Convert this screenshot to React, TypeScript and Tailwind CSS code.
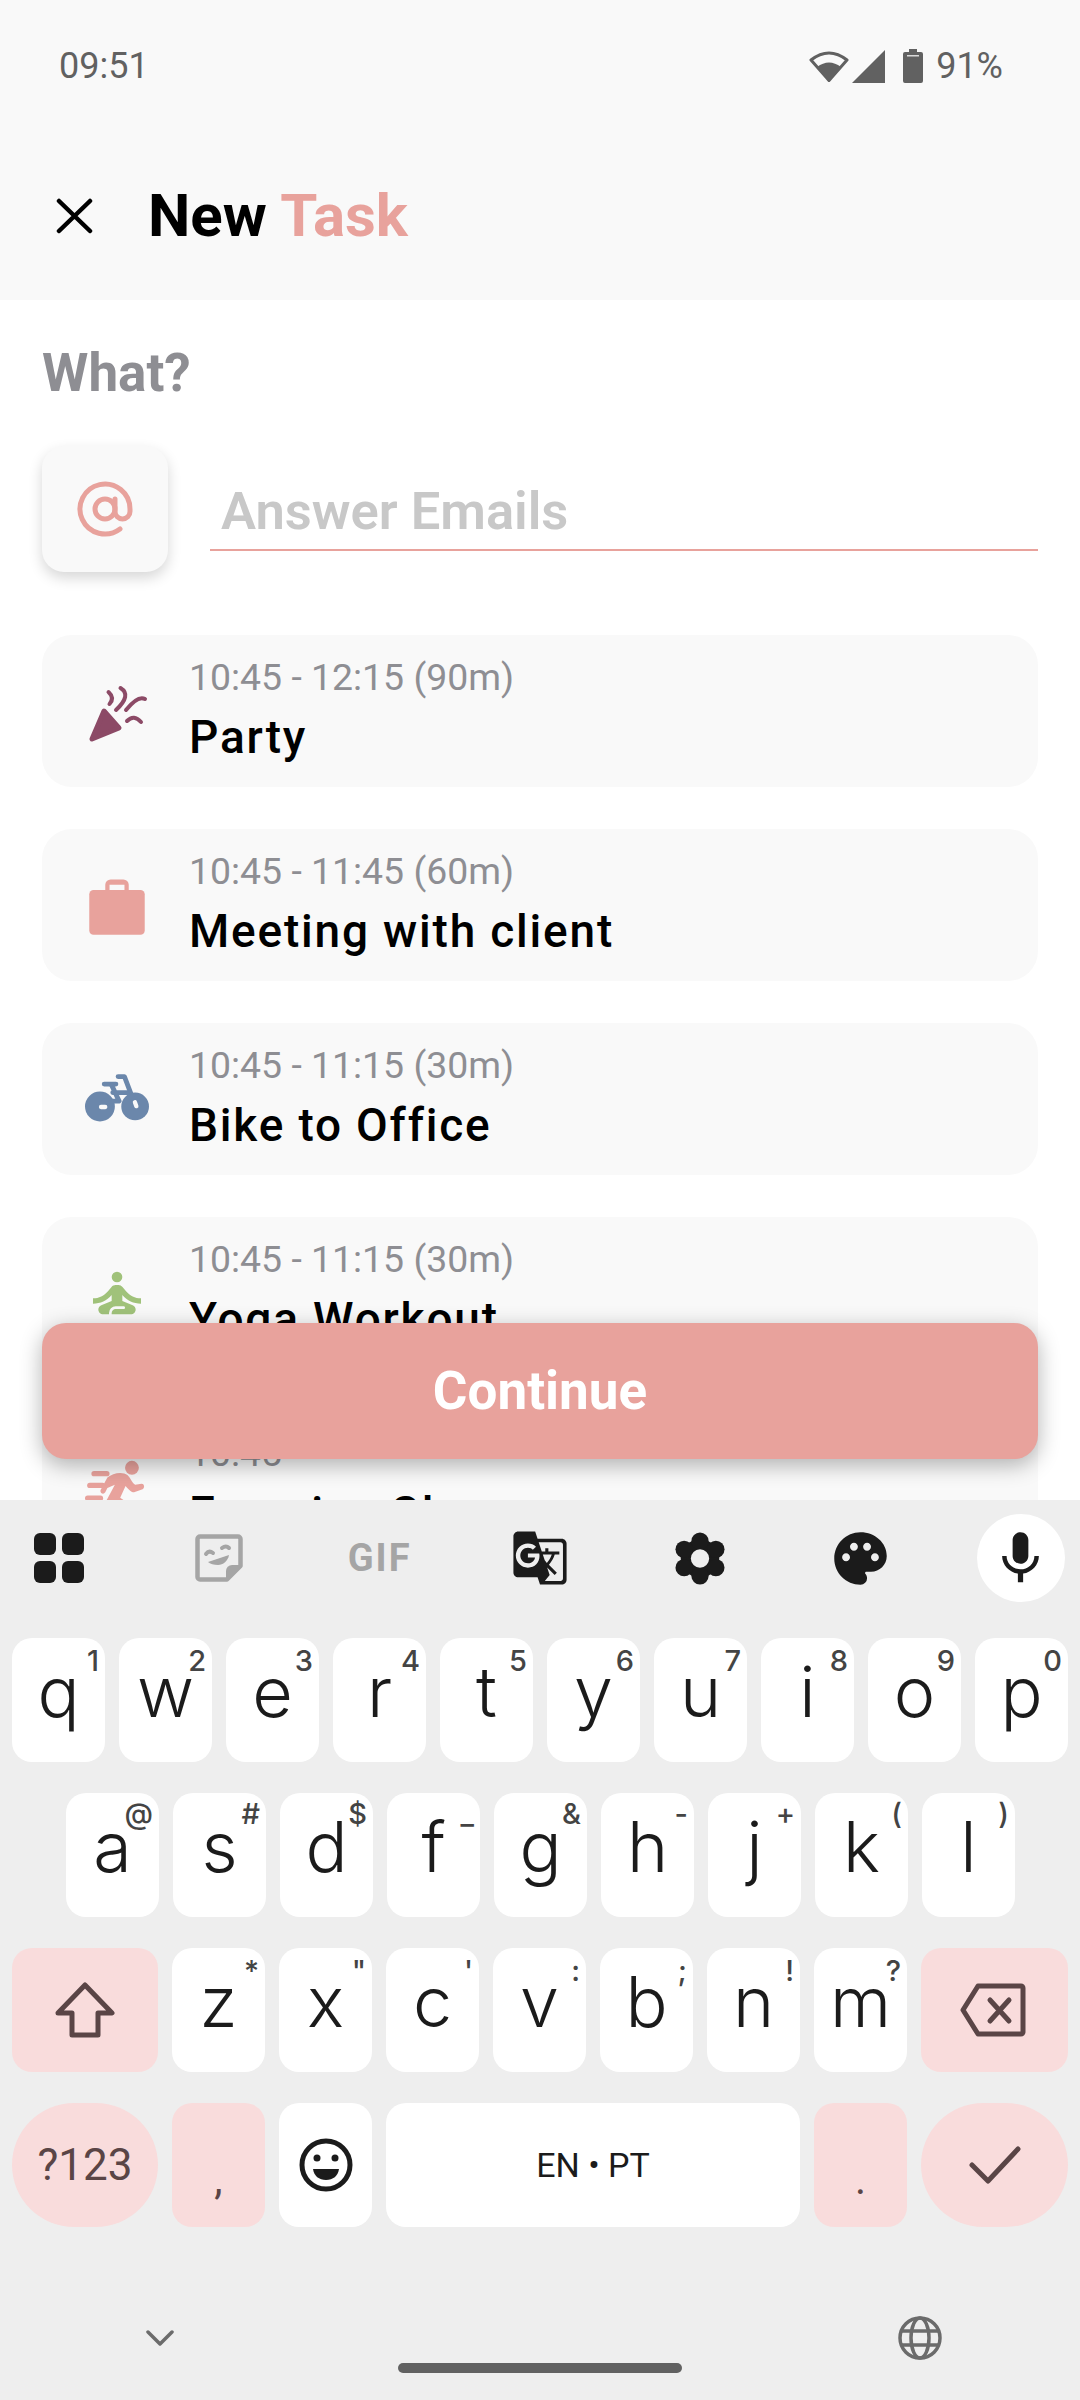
import { AtSign } from "lucide-react";
import { MdGTranslate, MdMic, MdPalette, MdSelfImprovement } from "react-icons/md";

const roboto = "font-['Roboto',sans-serif]";

function WifiIcon() {
  return (
    <svg width="40" height="34" viewBox="0 0 40 34" className="text-[#616161]">
      <path d="M20 31.5 2 11Q20-3 38 11Z" fill="none" stroke="currentColor" strokeWidth="3" strokeLinejoin="round" />
      <path d="M20 33 8 18Q20 9 32 18Z" fill="currentColor" />
    </svg>
  );
}

function SignalIcon() {
  return (
    <svg width="33" height="33" viewBox="0 0 33 33" className="text-[#616161]">
      <path d="M33 0v33H0Z" fill="currentColor" />
    </svg>
  );
}

function BatteryIcon() {
  return (
    <svg width="20" height="34" viewBox="0 0 20 34" className="text-[#616161]">
      <path d="M6 0h8v3h4a2 2 0 0 1 2 2v27a2 2 0 0 1-2 2H2a2 2 0 0 1-2-2V5a2 2 0 0 1 2-2h4Z" fill="currentColor" />
      <rect x="4" y="6" width="12" height="1.5" fill="#f9f9f9" opacity="0.8" />
    </svg>
  );
}

function CloseIcon() {
  return (
    <svg width="37" height="36" viewBox="0 0 37 36" fill="none" stroke="black" strokeWidth="4.5" strokeLinecap="round">
      <path d="M3 3 34 33M34 3 3 33" />
    </svg>
  );
}

function PartyIcon() {
  return (
    <svg width="64" height="64" viewBox="0 0 64 64" fill="none" stroke="#8c4a66" strokeWidth="4" strokeLinecap="round" strokeLinejoin="round">
      <path d="M7 60 19 32 34 49Z" fill="#8c4a66" strokeWidth="5" />
      <path d="M23.5 13Q30 19 24.5 25" />
      <path d="M35.5 9Q47 16 31 31" />
      <path d="M60 20Q53 16 41 31" />
      <path d="M42 42Q49 35 56 43" />
    </svg>
  );
}

function BagIcon() {
  return (
    <svg width="64" height="64" viewBox="0 0 60 60" fill="#e8a29c">
      <path fillRule="evenodd" d="M24 6h12a5 5 0 0 1 5 5v6h-4v-6H23v6h-4v-6a5 5 0 0 1 5-5Z" />
      <rect x="4" y="16" width="52" height="42" rx="4" />
    </svg>
  );
}

function BikeIcon() {
  return (
    <svg width="64" height="64" viewBox="0 0 60 60">
      <g fill="#6b87ab">
        <circle cx="14" cy="37" r="14" />
        <circle cx="47" cy="37" r="13" />
      </g>
      <g fill="none" stroke="#6b87ab" strokeWidth="4.5" strokeLinecap="round" strokeLinejoin="round">
        <path d="M31 9h6l11 29" />
        <path d="M18 16h11" />
        <path d="M25 17l7 15h-14M26 24h16" />
      </g>
      <rect x="13" y="35.5" width="8" height="4" rx="2" fill="#f9f9f9" />
      <rect x="45.5" y="31" width="4" height="8" rx="2" fill="#f9f9f9" transform="rotate(-20 47 35)" />
    </svg>
  );
}

function RunIcon() {
  return (
    <svg width="64" height="64" viewBox="0 0 60 60" fill="#e8a29c">
      <circle cx="44" cy="12" r="6.5" />
      <path d="M21 21c5-4 14-6 19-2 3 3 4 7 7 9l6-1c3 0 3 4 1 5l-8 3c-3 0-6-4-8-6l-5 11 7 5 6 2v9H32l-6-9-5 9h-9l9-15 7-13-7 3-2 4c-2 3-6 0-4-3Z" />
      <rect x="6" y="15" width="17" height="5" rx="2.5" />
      <rect x="2" y="26" width="17" height="5" rx="2.5" />
      <rect x="0" y="38" width="17" height="5" rx="2.5" />
    </svg>
  );
}

function GridIcon() {
  return (
    <div className="grid grid-cols-[22px_22px] gap-[6px]">
      <div className="h-[22px] rounded-[6px] bg-[#1b1b1b]" />
      <div className="h-[22px] rounded-[6px] bg-[#1b1b1b]" />
      <div className="h-[22px] rounded-[6px] bg-[#1b1b1b]" />
      <div className="h-[22px] rounded-[6px] bg-[#1b1b1b]" />
    </div>
  );
}

function StickerIcon() {
  return (
    <svg width="48" height="48" viewBox="0 0 48 48" fill="none" stroke="#a5a5a5" strokeWidth="4.5" strokeLinejoin="round">
      <path d="M5 2.5h38a2.5 2.5 0 0 1 2.5 2.5v27L32 45.5H5A2.5 2.5 0 0 1 2.5 43V5A2.5 2.5 0 0 1 5 2.5Z" />
      <path d="M45 31h-8a6 6 0 0 0-6 6v8Z" fill="#a5a5a5" stroke="none" />
      <path d="M13 28l21-7c-1 6-6 10-11 10-4 0-8-1-10-3Z" fill="#a5a5a5" stroke="none" />
      <path d="M11 20q3-4 7-1M27 14q4-3 7 0" strokeWidth="4" strokeLinecap="round" />
    </svg>
  );
}

function GearIcon() {
  return (
    <svg width="50" height="53" viewBox="0 0 52 54" fill="#1b1b1b">
      <circle cx="26" cy="27" r="20" />
      <circle cx="26" cy="9" r="9" />
      <circle cx="26" cy="45" r="9" />
      <circle cx="9.5" cy="17.5" r="9" />
      <circle cx="42.5" cy="17.5" r="9" />
      <circle cx="9.5" cy="36.5" r="9" />
      <circle cx="42.5" cy="36.5" r="9" />
      <circle cx="26" cy="27" r="9.5" fill="#eeeeee" />
    </svg>
  );
}

function ShiftIcon() {
  return (
    <svg width="60" height="56" viewBox="0 0 60 56" fill="none" stroke="#5a4546" strokeWidth="5" strokeLinejoin="round">
      <path d="M30 3 57 31H43v22H17V31H3Z" />
    </svg>
  );
}

function DeleteIcon() {
  return (
    <svg width="66" height="54" viewBox="0 0 66 54" fill="none" stroke="#5a4546" strokeWidth="5" strokeLinejoin="round" strokeLinecap="round">
      <path d="M18 3h43a2 2 0 0 1 2 2v44a2 2 0 0 1-2 2H18L3 27Z" />
      <path d="M30 17 49 38M49 17 30 38" />
    </svg>
  );
}

function EmojiIcon() {
  return (
    <svg width="54" height="54" viewBox="0 0 54 54">
      <circle cx="27" cy="27" r="24" fill="none" stroke="#1b1b1b" strokeWidth="5" />
      <circle cx="18" cy="20" r="3.5" fill="#1b1b1b" />
      <circle cx="36" cy="20" r="3.5" fill="#1b1b1b" />
      <path d="M14 31h26c-1 7-6 11-13 11s-12-4-13-11Z" fill="#1b1b1b" />
    </svg>
  );
}

function CheckIcon() {
  return (
    <svg width="52" height="38" viewBox="0 0 52 38" fill="none" stroke="#5a4546" strokeWidth="5" strokeLinecap="round" strokeLinejoin="round">
      <path d="M3 19 19 35 49 3" />
    </svg>
  );
}

function ChevronIcon() {
  return (
    <svg width="28" height="16" viewBox="0 0 28 16" fill="none" stroke="#6b6b6b" strokeWidth="3.5" strokeLinecap="round" strokeLinejoin="round">
      <path d="M2 2 14 14 26 2" />
    </svg>
  );
}

function GlobeIcon() {
  return (
    <svg width="44" height="44" viewBox="0 0 44 44" fill="none" stroke="#6b6b6b" strokeWidth="3.5">
      <circle cx="22" cy="22" r="20" />
      <ellipse cx="22" cy="22" rx="9" ry="20" />
      <path d="M4 15h36M4 29h36" />
    </svg>
  );
}

type Task = { time: string; title: string; icon: React.ReactNode };

const tasks: Task[] = [
  { time: "10:45 - 12:15 (90m)", title: "Party", icon: <PartyIcon /> },
  { time: "10:45 - 11:45 (60m)", title: "Meeting with client", icon: <BagIcon /> },
  { time: "10:45 - 11:15 (30m)", title: "Bike to Office", icon: <BikeIcon /> },
  { time: "10:45 - 11:15 (30m)", title: "Yoga Workout", icon: <MdSelfImprovement size={64} color="#a0c27a" /> },
  { time: "10:45", title: "Exercise Class", icon: <RunIcon /> },
];

function TaskCard({ task }: { task: Task }) {
  return (
    <div className="flex h-[152px] shrink-0 items-center gap-[40px] rounded-[30px] bg-[#f9f9f9] pl-[43px]">
      {task.icon}
      <div className="flex flex-col pb-[2px]">
        <span className="text-[37.4px] leading-[44px] text-[#8e8e93]">{task.time}</span>
        <span className="mt-[10px] text-[46px] leading-[56px] font-[490] tracking-[1.8px] text-black">{task.title}</span>
      </div>
    </div>
  );
}

function Key({ label, hint, hintTop = "top-[5px]" }: { label: string; hint: string; hintTop?: string }) {
  return (
    <div className="relative flex h-[124px] w-[93px] shrink-0 justify-center rounded-[20px] bg-white pt-[19px] font-['Inter',sans-serif] text-[70px] leading-[70px] font-[350] text-[#1b1b1b]">
      {label}
      <span className={`absolute right-[6px] ${hintTop} text-[29px] leading-[36px] font-medium text-[#444444]`}>{hint}</span>
    </div>
  );
}

const row1 = [["q", "1"], ["w", "2"], ["e", "3"], ["r", "4"], ["t", "5"], ["y", "6"], ["u", "7"], ["i", "8"], ["o", "9"], ["p", "0"]];
const row2 = [["a", "@"], ["s", "#"], ["d", "$"], ["f", "_"], ["g", "&"], ["h", "-"], ["j", "+"], ["k", "("], ["l", ")"]];
const row3 = [["z", "*"], ["x", '"'], ["c", "'"], ["v", ":"], ["b", ";"], ["n", "!"], ["m", "?"]];

function Keyboard() {
  return (
    <div className="relative flex h-[900px] flex-col bg-[#eeeeee]">
      {/* Toolbar */}
      <div className="flex h-[138px] items-start justify-between px-[15px] pt-[14px]">
        <div className="flex h-[88px] w-[88px] items-center justify-center"><GridIcon /></div>
        <div className="flex h-[88px] w-[88px] items-center justify-center"><StickerIcon /></div>
        <div className="flex h-[88px] w-[88px] items-center justify-center text-[38px] font-bold tracking-[2px] text-[#a5a5a5]">GIF</div>
        <div className="flex h-[88px] w-[88px] items-center justify-center"><MdGTranslate size={58} color="#1b1b1b" /></div>
        <div className="flex h-[88px] w-[88px] items-center justify-center"><GearIcon /></div>
        <div className="flex h-[88px] w-[88px] items-center justify-center"><MdPalette size={63} color="#1b1b1b" /></div>
        <div className="flex h-[88px] w-[88px] items-center justify-center rounded-full bg-white"><MdMic size={63} color="#1b1b1b" /></div>
      </div>

      {/* Keys */}
      <div className="flex flex-col gap-[31px]">
        <div className="flex gap-[14px] px-[12px]">
          {row1.map(([label, hint]) => <Key key={label} label={label} hint={hint} />)}
        </div>
        <div className="flex gap-[14px] px-[66px]">
          {row2.map(([label, hint]) => <Key key={label} label={label} hint={hint} hintTop="top-[3px]" />)}
        </div>
        <div className="flex gap-[14px] px-[12px]">
          <div className="flex h-[124px] w-[146px] items-center justify-center rounded-[20px] bg-[#f9dcdc]"><ShiftIcon /></div>
          {row3.map(([label, hint]) => <Key key={label} label={label} hint={hint} />)}
          <div className="flex h-[124px] flex-1 items-center justify-center rounded-[20px] bg-[#f9dcdc] pr-[4px]"><DeleteIcon /></div>
        </div>
        <div className="flex gap-[14px] px-[12px]">
          <div className="flex h-[124px] w-[146px] items-center justify-center rounded-full bg-[#f9dcdc] text-[44px] text-[#5a4546]">?123</div>
          <div className="flex h-[124px] w-[93px] items-end justify-center rounded-[20px] bg-[#f9dcdc] pb-[26px] text-[42px] leading-[42px] text-[#5a4546]">,</div>
          <div className="flex h-[124px] w-[93px] items-center justify-center rounded-[20px] bg-white"><EmojiIcon /></div>
          <div className="flex h-[124px] flex-1 items-center justify-center rounded-[20px] bg-white text-[34px] text-[#1b1b1b]">EN • PT</div>
          <div className="flex h-[124px] w-[93px] items-end justify-center rounded-[20px] bg-[#f9dcdc] pb-[26px] text-[42px] leading-[42px] text-[#5a4546]">.</div>
          <div className="flex h-[124px] w-[147px] items-center justify-center rounded-full bg-[#f9dcdc]"><CheckIcon /></div>
        </div>
      </div>

      {/* Nav area */}
      <div className="flex items-center justify-between pt-[89px] pr-[138px] pl-[146px]">
        <ChevronIcon />
        <GlobeIcon />
      </div>
      <div className="absolute bottom-[27px] left-[398px] h-[10px] w-[284px] rounded-full bg-[#616161]" />
    </div>
  );
}

export default function App() {
  return (
    <div className={`flex h-[2400px] w-[1080px] flex-col overflow-hidden bg-white ${roboto}`}>
      {/* Status bar + header */}
      <div className="h-[300px] shrink-0 bg-[#f9f9f9]">
        <div className="flex h-[132px] items-center justify-between pr-[77px] pl-[59px] text-[36px] text-[#616161]">
          <span>09:51</span>
          <div className="flex items-center gap-[3px]">
            <WifiIcon />
            <SignalIcon />
            <span className="ml-[15px]"><BatteryIcon /></span>
            <span className="ml-[10px]">91%</span>
          </div>
        </div>
        <div className="flex h-[168px] items-center gap-[55px] pl-[56px]">
          <CloseIcon />
          <h1 className="text-[60px] font-bold text-black">
            New <span className="text-[#e8a29c]">Task</span>
          </h1>
        </div>
      </div>

      {/* Body */}
      <div className="relative flex-1 overflow-hidden px-[42px] pt-[43px]">
        <h2 className="text-[53px] leading-[60px] font-bold text-[#8e8e93]">What?</h2>
        <div className="mt-[43px] flex items-start gap-[42px]">
          <div className="flex h-[126px] w-[126px] shrink-0 items-center justify-center rounded-[22px] bg-[#f9f9f9] shadow-[0_6px_14px_rgba(0,0,0,0.16)]">
            <AtSign size={60} strokeWidth={2} color="#e8a29c" />
          </div>
          <input
            readOnly
            placeholder="Answer Emails"
            className="mt-[27px] h-[78px] min-w-0 flex-1 border-b-2 border-[#e8a29c] px-[11px] text-[52.5px] font-semibold outline-none placeholder:text-[#c8c8c8]"
          />
        </div>
        <div className="mt-[63px] flex flex-col gap-[42px]">
          {tasks.map((task) => <TaskCard key={task.title} task={task} />)}
        </div>
        <button className="absolute top-[1023px] right-[42px] left-[42px] h-[136px] rounded-[24px] bg-[#e8a29c] pt-[2px] text-[53px] font-bold text-white shadow-[0_6px_22px_rgba(0,0,0,0.3)]">
          Continue
        </button>
      </div>

      <Keyboard />
    </div>
  );
}
